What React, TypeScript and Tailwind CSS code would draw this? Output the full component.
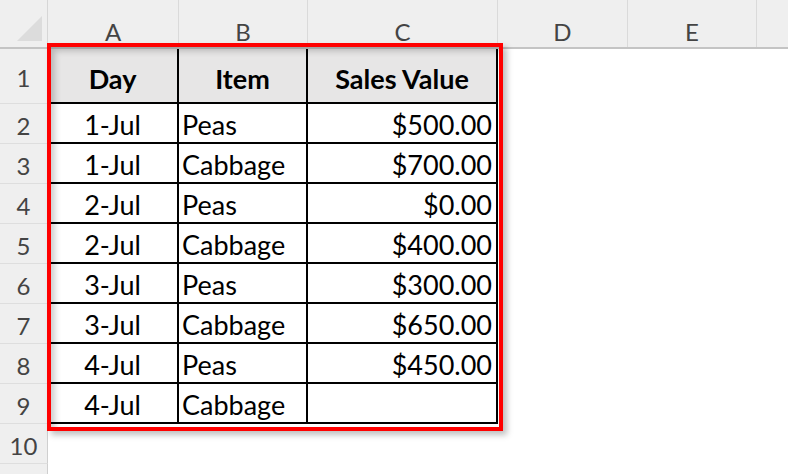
import React from "react";

const rows: [string, string, string][] = [
  ["1-Jul", "Peas", "$500.00"],
  ["1-Jul", "Cabbage", "$700.00"],
  ["2-Jul", "Peas", "$0.00"],
  ["2-Jul", "Cabbage", "$400.00"],
  ["3-Jul", "Peas", "$300.00"],
  ["3-Jul", "Cabbage", "$650.00"],
  ["4-Jul", "Peas", "$450.00"],
  ["4-Jul", "Cabbage", ""],
];

const cols = [
  { label: "A", w: "w-[131px]" },
  { label: "B", w: "w-[129px]" },
  { label: "C", w: "w-[190px]" },
  { label: "D", w: "w-[130px]" },
  { label: "E", w: "w-[129px]" },
];

const RowHead: React.FC<{ n?: number; h: string }> = ({ n, h }) => (
  <div
    className={`${h} w-[48px] shrink-0 bg-[#efefef] border-r border-b border-r-[#cfcfcf] border-b-[#dedede] flex items-center justify-center pt-1 text-[24px] text-[#444]`}
  >
    {n}
  </div>
);

const App: React.FC = () => {
  return (
    <div
      className="relative w-[788px] h-[474px] overflow-hidden bg-white text-black"
      style={{ fontFamily: "Lato, 'Open Sans', sans-serif" }}
    >
      {/* column letters */}
      <div className="flex h-[49px] bg-[#efefef] border-b-2 border-[#c4c4c4]">
        <div className="w-[48px] shrink-0 border-r border-[#d6d6d6] flex items-end justify-end pr-[5px] pb-[6px]">
          <svg width="25" height="25" viewBox="0 0 25 25">
            <polygon points="25,0 25,25 0,25" fill="#dcdcdc" />
          </svg>
        </div>
        {cols.map((c) => (
          <div
            key={c.label}
            className={`${c.w} shrink-0 border-r border-[#dadada] flex items-center justify-center pt-[16px] text-[24px] text-[#444]`}
          >
            {c.label}
          </div>
        ))}
        <div className="flex-1" />
      </div>

      {/* header row */}
      <div className="flex h-[55px]">
        <RowHead n={1} h="h-[55px]" />
        <div className="w-[131px] shrink-0 bg-[#e7e6e6] border-r-2 border-b-2 border-black flex items-center justify-center pt-2 text-[27px] font-bold">
          Day
        </div>
        <div className="w-[129px] shrink-0 bg-[#e7e6e6] border-r-2 border-b-2 border-black flex items-center justify-center pt-2 text-[27px] font-bold">
          Item
        </div>
        <div className="w-[190px] shrink-0 bg-[#e7e6e6] border-r-2 border-b-2 border-black flex items-center justify-center pt-2 text-[27px] font-bold">
          Sales Value
        </div>
        <div className="flex-1" />
      </div>

      {rows.map((r, i) => (
        <div key={i} className="flex h-[40px]">
          <RowHead n={i + 2} h="h-[40px]" />
          <div className="w-[131px] shrink-0 border-r-2 border-b-2 border-black flex items-center justify-center pt-1 text-[27px]">
            {r[0]}
          </div>
          <div className="w-[129px] shrink-0 border-r-2 border-b-2 border-black flex items-center pl-[3px] pt-1 text-[27px]">
            {r[1]}
          </div>
          <div className="w-[190px] shrink-0 border-r-2 border-b-2 border-black flex items-center justify-end pr-[4px] pt-1 text-[27px]">
            {r[2]}
          </div>
          <div className="flex-1" />
        </div>
      ))}

      <div className="flex h-[40px]">
        <RowHead n={10} h="h-[40px]" />
        <div className="flex-1" />
      </div>
      <div className="flex h-[40px]">
        <RowHead h="h-[40px]" />
        <div className="flex-1" />
      </div>

      {/* selection highlight drawn over the table */}
      <div className="absolute left-[47px] top-[43px] w-[456px] h-[388px] border-[4px] border-[#ff0000] shadow-[4px_4px_6px_rgba(0,0,0,0.25),inset_4px_4px_6px_rgba(0,0,0,0.2)] pointer-events-none" />
    </div>
  );
};

export default App;
